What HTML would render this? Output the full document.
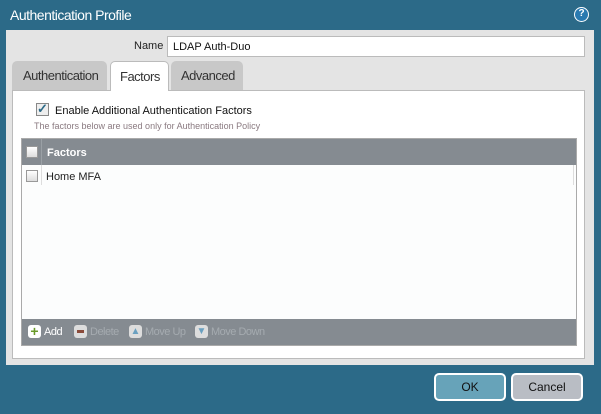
<!DOCTYPE html>
<html><head><style>
*{box-sizing:border-box;margin:0;padding:0}
body{width:601px;height:414px;background:#2c6a88;font-family:"Liberation Sans",sans-serif;position:relative;overflow:hidden}
.a{position:absolute}
.cb{position:absolute;width:12px;height:12px;border:1px solid #999;background:linear-gradient(#fff,#ddd)}
</style></head><body>
<div class="a" style="left:10px;top:7px;color:#fff;font-size:14px;letter-spacing:-0.5px">Authentication Profile</div>
<div class="a" style="left:574px;top:7px;width:15px;height:15px;border-radius:50%;background:#2a7ab0;border:1.5px solid #fff;color:#fff;font-size:10px;font-weight:bold;text-align:center;line-height:12px">?</div>
<div class="a" style="left:6px;top:30px;width:588px;height:335px;background:#e4e4e4"></div>
<div class="a" style="left:134px;top:40px;font-size:11px;color:#222">Name</div>
<div class="a" style="left:167px;top:36px;width:418px;height:21px;background:#fff;border:1px solid #bbb;font-size:11px;padding:4px 5px;color:#111">LDAP Auth-Duo</div>
<div class="a" style="left:12px;top:61px;width:95px;height:29px;background:#c8c8c8;border-radius:5px 5px 0 0;font-size:13px;color:#333;padding:7px 0 0 11px;letter-spacing:-0.5px">Authentication</div>
<div class="a" style="left:110px;top:61px;width:59px;height:30px;background:#fff;border:1px solid #bbb;border-bottom:none;border-radius:5px 5px 0 0;font-size:13px;color:#333;padding:7px 0 0 9px;letter-spacing:-0.5px;z-index:2">Factors</div>
<div class="a" style="left:171px;top:61px;width:72px;height:29px;background:#c8c8c8;border-radius:5px 5px 0 0;font-size:13px;color:#333;padding:7px 0 0 10px;letter-spacing:-0.5px">Advanced</div>
<div class="a" style="left:12px;top:90px;width:573px;height:269px;background:#fff;border:1px solid #bbb"></div>
<div class="a" style="left:36px;top:103px;width:13px;height:13px;border:1px solid #888;background:#eee;color:#2c6a88;font-size:13px;line-height:10px;font-weight:bold">✓</div>
<div class="a" style="left:55px;top:105px;font-size:11px;color:#111">Enable Additional Authentication Factors</div>
<div class="a" style="left:34px;top:121px;font-size:9px;color:#8a7a80">The factors below are used only for Authentication Policy</div>
<div class="a" style="left:21px;top:138px;width:556px;height:208px;border:1px solid #aaa;background:#fcfdfd"></div>
<div class="a" style="left:22px;top:139px;width:554px;height:26px;background:#858b91"></div>
<div class="a" style="left:41px;top:139px;width:1px;height:26px;background:#9aa0a5"></div>
<div class="cb" style="left:26px;top:146px"></div>
<div class="a" style="left:47px;top:147px;font-size:11px;color:#fff;font-weight:bold">Factors</div>
<div class="cb" style="left:26px;top:170px"></div>
<div class="a" style="left:46px;top:171px;font-size:11px;color:#222">Home MFA</div>
<div class="a" style="left:41px;top:165px;width:1px;height:20px;background:#ddd"></div>
<div class="a" style="left:573px;top:165px;width:1px;height:20px;background:#ddd"></div>
<div class="a" style="left:22px;top:319px;width:554px;height:26px;background:#858b91"></div>
<div class="a" style="left:28px;top:325px;width:13px;height:13px;background:#fff;border-radius:3px;color:#6a9a2a;font-weight:bold;font-size:14px;line-height:12px;text-align:center">+</div>
<div class="a" style="left:44px;top:326px;font-size:11px;color:#fff;letter-spacing:-0.5px">Add</div>
<div class="a" style="left:74px;top:325px;width:13px;height:13px;background:#ddd;border-radius:3px"><div class="a" style="left:3px;top:5px;width:7px;height:3px;background:#8a4a3a"></div></div>
<div class="a" style="left:90px;top:326px;font-size:11px;color:#a5abb0;letter-spacing:-0.5px">Delete</div>
<div class="a" style="left:129px;top:325px;width:13px;height:13px;background:#ddd;border-radius:3px;color:#6aa0c0;font-size:10px;text-align:center;line-height:13px">▲</div>
<div class="a" style="left:145px;top:326px;font-size:11px;color:#a5abb0;letter-spacing:-0.5px">Move Up</div>
<div class="a" style="left:195px;top:325px;width:13px;height:13px;background:#ddd;border-radius:3px;color:#6aa0c0;font-size:10px;text-align:center;line-height:13px">▼</div>
<div class="a" style="left:211px;top:326px;font-size:11px;color:#a5abb0;letter-spacing:-0.5px">Move Down</div>
<div class="a" style="left:434px;top:373px;width:72px;height:28px;background:#67a3b9;border:2px solid #fff;border-radius:5px;font-size:12px;text-align:center;line-height:24px;color:#111">OK</div>
<div class="a" style="left:511px;top:373px;width:72px;height:28px;background:#b9bdc4;border:2px solid #fff;border-radius:5px;font-size:12px;text-align:center;line-height:24px;color:#111">Cancel</div>
</body></html>
